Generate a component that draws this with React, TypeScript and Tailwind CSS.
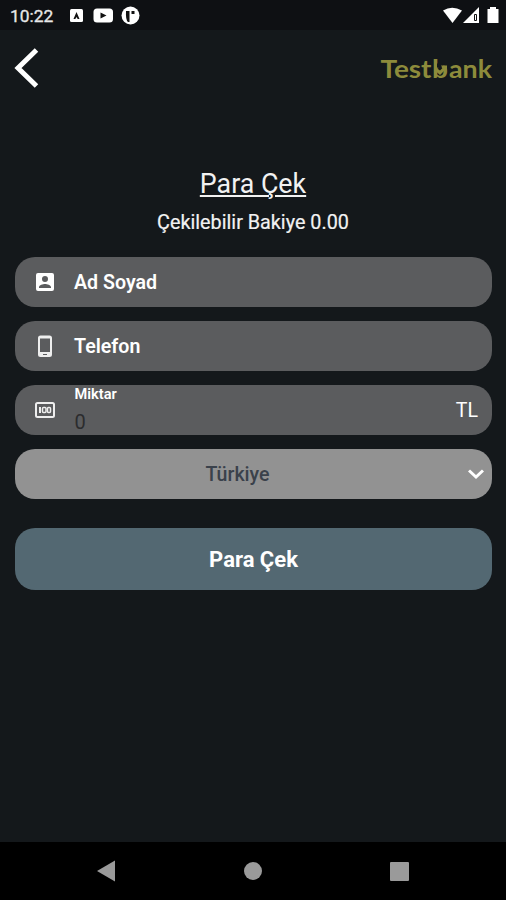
import React from 'react';

interface FieldProps {
  icon: React.ReactNode;
  label: string;
}

const Field: React.FC<FieldProps> = ({ icon, label }) => (
  <div className="h-[50px] rounded-[20px] bg-[#5b5c5e] flex items-center pl-[18px]">
    {icon}
    <span className="ml-[17px] mt-[2px] text-[19.6px] leading-[24px] font-semibold">{label}</span>
  </div>
);

const Logo: React.FC = () => (
  <svg className="mt-px" width="114" height="28" viewBox="0 0 114 28" fill="#8d8b3b">
    <g fontFamily="Lato, sans-serif" fontWeight="700" fontSize="24">
      <text x="1.500" y="23" textLength="51" lengthAdjust="spacingAndGlyphs">Test</text>
      <text x="53" y="23" textLength="16" lengthAdjust="spacingAndGlyphs">b</text>
      <text x="70" y="23" textLength="43" lengthAdjust="spacingAndGlyphs">ank</text>
    </g>
    {/* Arrow cut into the bowl of the b */}
    <path d="M58 8.500h8l-4 5-4-1z" fill="#14181b" />
    <path d="M57.500 13l3.500 2.500 2.500-2.500-1.500-2.500h6v5.500l-2-1-5 5-4-3.500z" />
  </svg>
);

const App: React.FC = () => {
  return (
    <div className="w-[506px] h-[900px] flex flex-col bg-[#14181b] text-white font-['Roboto',sans-serif] overflow-hidden">
      {/* Status bar */}
      <div className="h-[30px] bg-[#0e1013] flex items-center pl-[10px] pr-[6px]">
        <span className="w-[60px] text-[17.4px] leading-[20px] mt-[2px] text-[#e8e8e8] [-webkit-text-stroke:0.3px]">10:22</span>
        <svg className="mt-px" width="70" height="20" viewBox="0 0 70 20">
          <rect x="0" y="3" width="13" height="13" rx="1.5" fill="#fff" />
          <path d="M3.500 13L6.500 6l3 7h-1.800l-1.200-2-1.200 2z" fill="#111" />
          <rect x="23.500" y="2.500" width="19.500" height="14" rx="3.500" fill="#fff" />
          <path d="M30.500 6.500v6l6-3z" fill="#111" />
          <circle cx="60.500" cy="9.500" r="9" fill="#fff" />
          <path d="M56 5h3.500v11h-1.500q-2.500-2-2-11zM61.500 5h3v3h-3z" fill="#111" />
        </svg>
        <svg className="ml-auto" width="58" height="20" viewBox="0 0 58 20" fill="#fff">
          <path d="M1 5.500Q10 0 20 5.500L10.500 18z" />
          <path d="M21 18L37 2v16z" />
          <path d="M32.500 9.500h2v6h-2z" stroke="#111" fill="#fff" />
          <path d="M45.500 4h2.500V2h6v2h2.500v14h-11z" />
        </svg>
      </div>

      {/* Header */}
      <div className="h-[76px] flex items-center justify-between pl-[14px] pr-[13px]">
        <svg width="26" height="40" viewBox="0 0 26 40" fill="none" stroke="#fff" strokeWidth="5">
          <path d="M22.500 2L4 20l18.500 18" />
        </svg>
        <Logo />
      </div>

      {/* Form */}
      <main className="flex-1 flex flex-col pl-[15px] pr-[14px] pt-[62px]">
        <h1 className="text-center text-[26.8px] leading-[32px] text-[#f2f2f2] underline underline-offset-[2px] decoration-[1.500px] mr-px">
          Para Çek
        </h1>
        <p className="text-center text-[19.8px] leading-[24px] mt-[11px] text-[#f2f2f2] mr-px [-webkit-text-stroke:0.2px]">
          Çekilebilir Bakiye 0.00
        </p>

        <div className="flex flex-col gap-[14px] mt-[22px]">
          <Field
            label="Ad Soyad"
            icon={
              <svg width="24" height="24" viewBox="0 0 24 24" fill="#fff">
                <path d="M3 5v14a2 2 0 0 0 2 2h14a2 2 0 0 0 2-2V5a2 2 0 0 0-2-2H5a2 2 0 0 0-2 2zm12 4a3 3 0 1 1-6 0 3 3 0 0 1 6 0zm-9 8c0-2 4-3.100 6-3.100s6 1.100 6 3.100v1H6v-1z" />
              </svg>
            }
          />
          <Field
            label="Telefon"
            icon={
              <svg width="24" height="24" viewBox="0 0 24 24" fill="#eee">
                <path d="M16.500 1.500h-9A2.500 2.500 0 0 0 5 4v16.500A2.500 2.500 0 0 0 7.500 23h9a2.500 2.500 0 0 0 2.500-2.500V4A2.500 2.500 0 0 0 16.500 1.500zM14 21h-4v-1h4v1zm3-3H7V4.500h10V18z" />
              </svg>
            }
          />
          <div className="h-[50px] rounded-[20px] bg-[#5b5c5e] flex items-center pl-[18px] pr-[14px]">
            <svg width="24" height="24" viewBox="0 0 24 24" fill="none" stroke="#eee">
              <rect x="3" y="5" width="18" height="14" rx="1.500" strokeWidth="2" />
              <path d="M7 9v6" strokeWidth="2" />
              <rect x="9.500" y="9.500" width="3.500" height="5" rx="1" strokeWidth="1.500" />
              <rect x="14.500" y="9.500" width="3" height="5" rx="1" strokeWidth="1.500" />
            </svg>
            <div className="ml-[17.5px] self-stretch flex flex-col">
              <span className="text-[14.6px] leading-[18px] font-semibold">Miktar</span>
              <span className="text-[20px] leading-[24px] mt-[7px] text-[#2b2c2e]">0</span>
            </div>
            <span className="ml-auto mt-[2px] text-[19.6px] leading-[24px]">TL</span>
          </div>
          <div className="h-[50px] rounded-[20px] bg-[#929292] flex items-center pr-[8px]">
            <span className="flex-1 text-center text-[19.6px] leading-[24px] mt-px ml-[-8px] font-medium text-[#3a414b]">
              Türkiye
            </span>
            <svg width="16" height="12" viewBox="0 0 16 12" fill="none" stroke="#fff" strokeWidth="3">
              <path d="M1 2.500l7 6.500 7-6.500" />
            </svg>
          </div>
        </div>

        <button className="h-[62px] mt-[29px] rounded-[20px] bg-[#536872] text-[22px] font-bold">Para Çek</button>
      </main>

      {/* Navigation bar */}
      <nav className="h-[58px] bg-black flex items-center pl-[96px] pr-[97px] justify-between">
        <svg width="20" height="22" viewBox="0 0 20 22" fill="#9a9a9a">
          <path d="M1 11L19 .500v21z" />
        </svg>
        <span className="size-[18px] rounded-full bg-[#9a9a9a]" />
        <span className="size-[19px] rounded-[1px] bg-[#9a9a9a]" />
      </nav>
    </div>
  );
};

export default App;
